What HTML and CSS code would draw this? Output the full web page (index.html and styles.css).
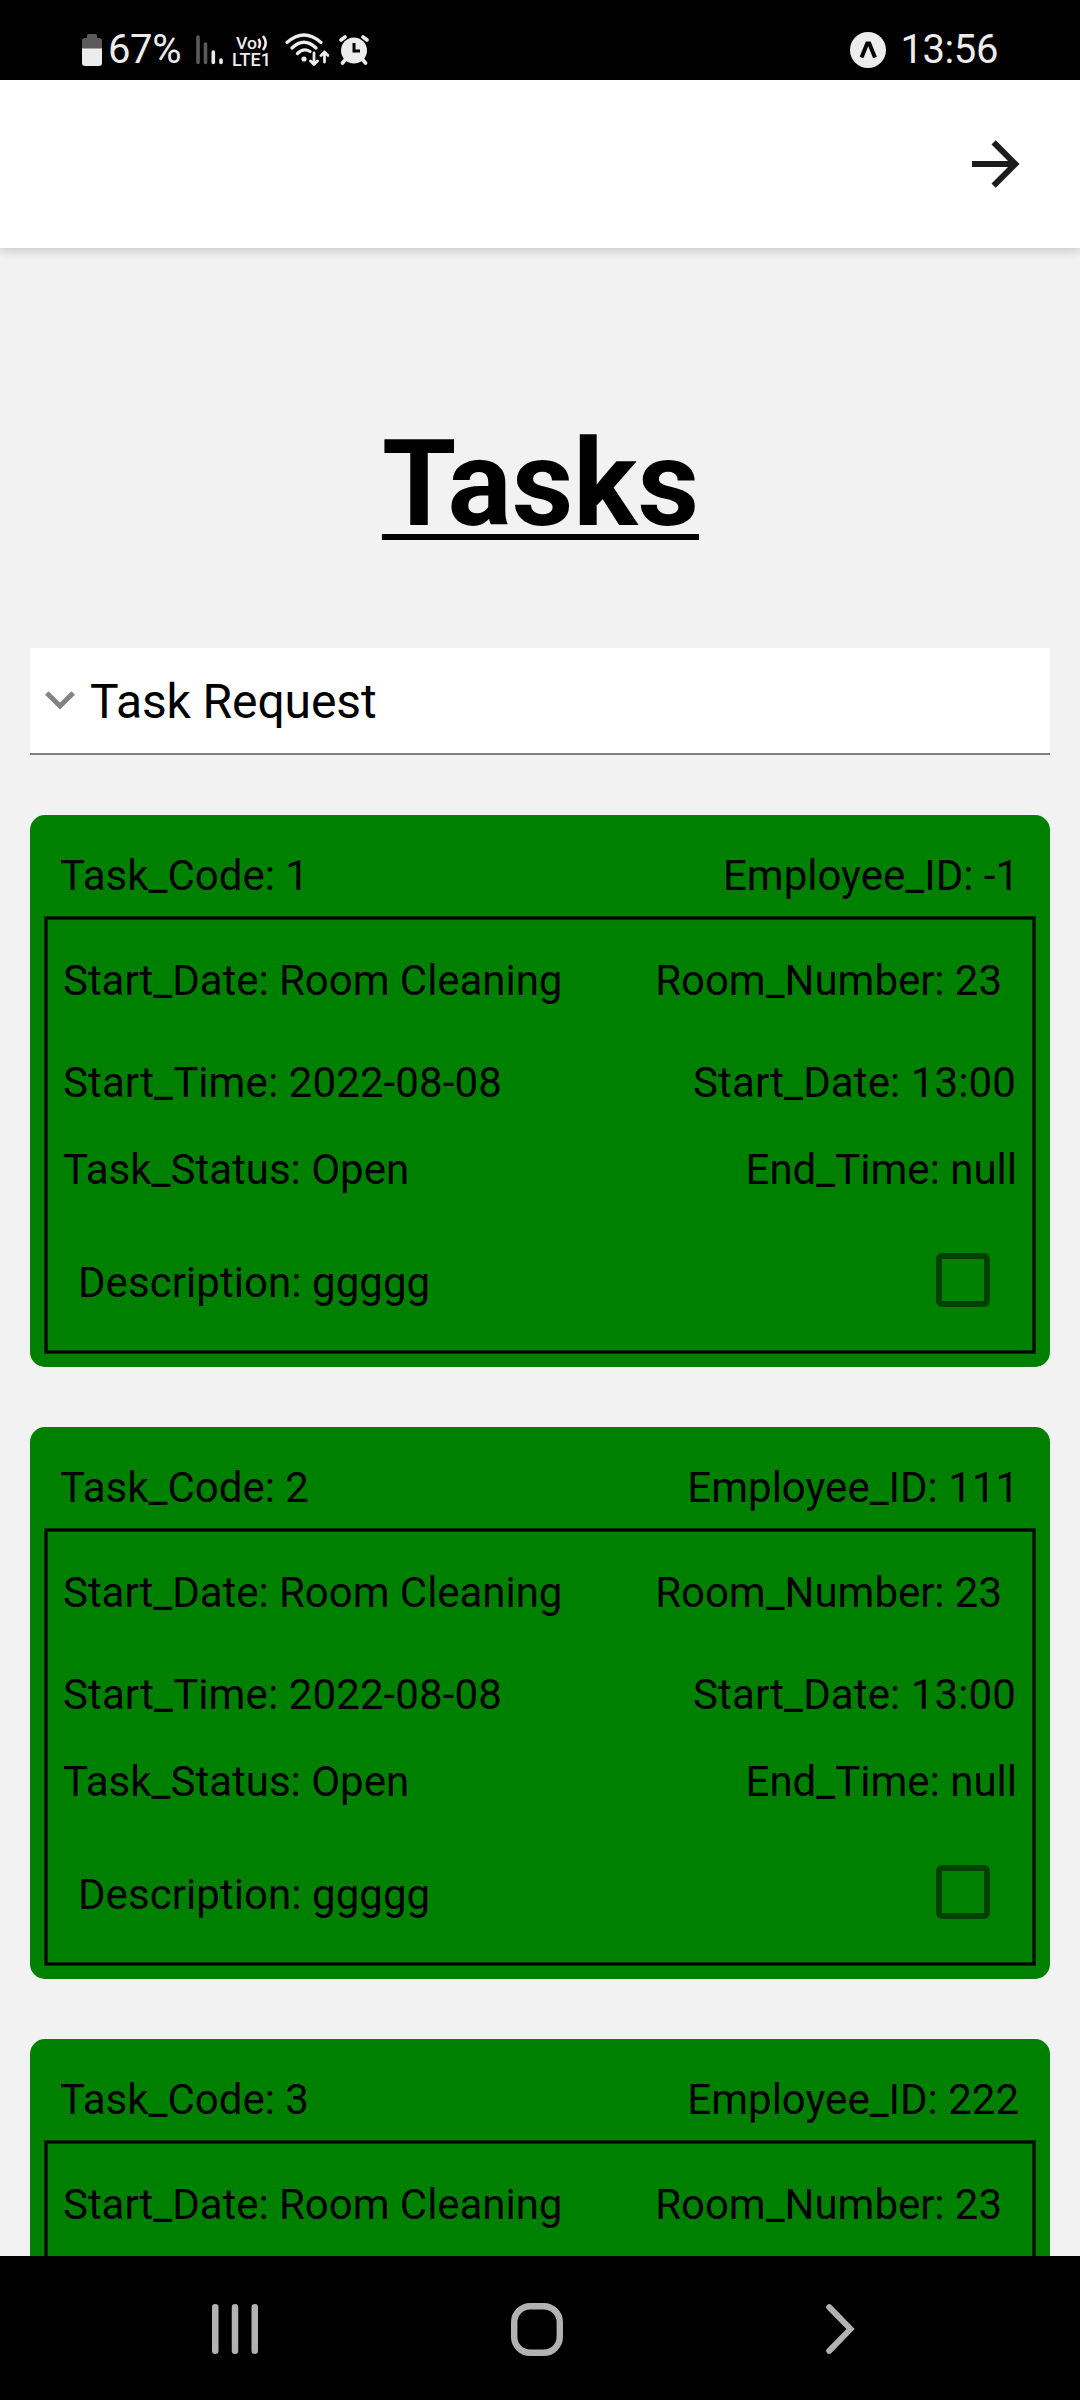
FILE: index.html
```html
<!DOCTYPE html>
<html lang="en">
<head>
<meta charset="utf-8">
<title>Tasks</title>
<link rel="stylesheet" href="styles.css">
</head>
<body>
<div class="screen">
  <div class="status-bar">
    <div class="status-left">
      <svg class="battery" width="20" height="32" viewBox="0 0 20 32">
        <path d="M5 3.500V1.500Q5 0 6.500 0H13.500Q15 0 15 1.500V4H17.500Q20 4 20 6.500V15H0V6.500Q0 4 2.500 4H5z" fill="#5a5a5a"/>
        <path d="M0 14.500H20V29Q20 32 17 32H3Q0 32 0 29z" fill="#ececec"/>
      </svg>
      <span class="status-text percent">67%</span>
      <svg class="signal" width="27" height="30" viewBox="0 0 27 30" fill="none" stroke-width="3.600" stroke-linecap="round">
        <path d="M2 2V27.500M9.500 9V27.500" stroke="#5a5a5a"/>
        <path d="M17.300 17V27.500M25 25V27.500" stroke="#ececec"/>
      </svg>
      <svg class="volte" width="38" height="34" viewBox="0 0 38 34">
        <text x="3" y="14.500" font-size="17" textLength="21" lengthAdjust="spacingAndGlyphs">Vo</text>
        <text x="-1" y="32" font-size="18" textLength="39" lengthAdjust="spacingAndGlyphs">LTE1</text>
        <path d="M25.500 5Q28.500 9.500 25.500 14M30 2Q35.500 9 30 16" fill="none" stroke="#ececec" stroke-width="2.600"/>
      </svg>
      <svg class="wifi" width="44" height="34" viewBox="0 0 44 34" fill="none" stroke="#ececec" stroke-width="3.200" stroke-linecap="round" stroke-linejoin="round">
        <path d="M2 9.500Q19 -5.500 36 9.500M7 15Q19 3.500 31 15M12.500 20.500Q18.500 14.500 25 18.500"/>
        <circle cx="19" cy="26" r="2.600" fill="#ececec" stroke="none"/>
        <path d="M29 20V31.500M25.500 28L29 31.500L32.500 28M39.500 29V19M36 22.500L39.500 19L43 22.500" stroke-width="2.800"/>
      </svg>
      <svg class="alarm" width="30" height="30" viewBox="0 0 30 30">
        <circle cx="15" cy="15.500" r="13" fill="#ececec"/>
        <path d="M2 5L6 2M28 5L24 2M6 25L3.500 28M24 25L26.500 28" stroke="#ececec" stroke-width="3.600" stroke-linecap="round"/>
        <path d="M15 8V16H21" fill="none" stroke="#000" stroke-width="3"/>
      </svg>
    </div>
    <div class="status-right">
      <svg class="expo" width="36" height="36" viewBox="0 0 36 36">
        <circle cx="18" cy="18" r="18" fill="#ececec"/>
        <path d="M11.500 25.500L17.200 11.500H19.300L25 25.500" fill="none" stroke="#000" stroke-width="4"/>
      </svg>
      <span class="status-text clock">13:56</span>
    </div>
  </div>

  <header class="app-bar">
    <svg width="72" height="72" viewBox="0 0 24 24" fill="#1c1c1e">
      <path d="M4 11V13H16L10.500 18.500L11.920 19.920L19.840 12L11.920 4.080L10.500 5.500L16 11H4Z"/>
    </svg>
  </header>

  <main class="content">
    <h1 class="title">Tasks</h1>

    <div class="picker">
      <svg width="30" height="19" viewBox="0 0 30 19">
        <path d="M1.800 2L15 15L28.200 2" fill="none" stroke="#848484" stroke-width="5"/>
      </svg>
      <span>Task Request</span>
    </div>

    <section class="card">
      <div class="row head"><span>Task_Code: 1</span><span>Employee_ID: -1</span></div>
      <div class="details">
        <div class="row room"><span>Start_Date: Room Cleaning</span><span>Room_Number: 23</span></div>
        <div class="row time"><span>Start_Time: 2022-08-08</span><span>Start_Date: 13:00</span></div>
        <div class="row state"><span>Task_Status: Open</span><span>End_Time: null</span></div>
        <div class="row description"><span>Description: ggggg</span><span class="checkbox"></span></div>
      </div>
    </section>

    <section class="card">
      <div class="row head"><span>Task_Code: 2</span><span>Employee_ID: 111</span></div>
      <div class="details">
        <div class="row room"><span>Start_Date: Room Cleaning</span><span>Room_Number: 23</span></div>
        <div class="row time"><span>Start_Time: 2022-08-08</span><span>Start_Date: 13:00</span></div>
        <div class="row state"><span>Task_Status: Open</span><span>End_Time: null</span></div>
        <div class="row description"><span>Description: ggggg</span><span class="checkbox"></span></div>
      </div>
    </section>

    <section class="card">
      <div class="row head"><span>Task_Code: 3</span><span>Employee_ID: 222</span></div>
      <div class="details">
        <div class="row room"><span>Start_Date: Room Cleaning</span><span>Room_Number: 23</span></div>
      </div>
    </section>
  </main>

  <nav class="nav-bar">
    <svg width="46" height="50" viewBox="0 0 46 50" stroke="#b2b2b2" stroke-width="6.500" stroke-linecap="round">
      <path d="M3.250 3.250V46.750M23 3.250V46.750M42.750 3.250V46.750"/>
    </svg>
    <svg class="home" width="52" height="53" viewBox="0 0 52 53">
      <rect x="3.200" y="3.200" width="45.600" height="46.600" rx="16" fill="none" stroke="#b2b2b2" stroke-width="6.400"/>
    </svg>
    <svg width="29" height="50" viewBox="0 0 29 50">
      <path d="M3.200 3.200L24.500 25L3.200 46.800" fill="none" stroke="#b2b2b2" stroke-width="6" stroke-linecap="round"/>
    </svg>
  </nav>
</div>
</body>
</html>
```
FILE: styles.css
```css
* {
  box-sizing: border-box;
}

body {
  margin: 0;
  font-family: Roboto, sans-serif;
  color: #000;
}

svg {
  display: block;
  flex: none;
}

.screen {
  display: flex;
  flex-direction: column;
  width: 1080px;
  height: 2400px;
  overflow: hidden;
  background: #f2f2f2;
}

.status-bar {
  display: flex;
  flex: none;
  justify-content: space-between;
  height: 80px;
  padding: 0 82px;
  background: #000;
}

.status-left,
.status-right {
  display: flex;
  align-items: flex-start;
}

.status-text {
  margin-top: 26px;
  font-size: 40px;
  line-height: 47px;
  color: #ececec;
}

.percent {
  width: 87px;
  margin-left: 6px;
  letter-spacing: -0.4px;
}

.clock {
  letter-spacing: -0.4px;
}

.battery {
  margin-top: 34px;
}

.signal {
  margin: 35px 0 0 1px;
}

.volte {
  margin: 34px 0 0 10px;
  overflow: visible;
  fill: #ececec;
  font-weight: 500;
}

.wifi {
  margin: 33px 0 0 14px;
}

.alarm {
  margin: 35px 0 0 10px;
}

.expo {
  margin: 32px 14px 0 0;
}

.app-bar {
  display: flex;
  flex: none;
  align-items: center;
  justify-content: flex-end;
  height: 168px;
  padding-right: 48px;
  background: #fff;
  box-shadow: 0 3px 10px rgba(0, 0, 0, 0.18);
}

.content {
  flex: 1;
  min-height: 0;
  padding: 166px 30px 0;
  overflow: hidden;
}

.status-bar,
.app-bar {
  position: relative;
}

.title {
  margin: 0 0 93px;
  padding-left: 1px;
  font-size: 120px;
  font-weight: 700;
  line-height: 141px;
  text-align: center;
  text-decoration: underline;
  text-decoration-thickness: 6px;
  text-underline-offset: 9px;
  text-decoration-skip-ink: none;
}

.picker {
  display: flex;
  align-items: center;
  height: 107px;
  padding-left: 15px;
  gap: 15px;
  border-bottom: 2px solid #808080;
  background: #fff;
  font-size: 48px;
  line-height: 56px;
  letter-spacing: -0.1px;
}

.picker span {
  padding-top: 3px;
}

.card {
  height: 552px;
  margin-top: 60px;
  padding: 36px 15px 14px;
  border-radius: 15px;
  background: #008000;
  font-size: 42px;
  line-height: 49px;
}

.row {
  display: flex;
  justify-content: space-between;
}

.head {
  padding: 0 16px 0 15px;
}

.details {
  height: 436px;
  margin-top: 17px;
  padding-top: 37px;
  border: 2px solid #000;
  box-shadow: 0 0 0 1px rgba(0, 0, 0, 0.6), inset 0 0 0 1px rgba(0, 0, 0, 0.6);
}

.room {
  padding: 0 31px 0 16px;
  letter-spacing: -0.04px;
}

.time {
  margin-top: 53px;
  padding: 0 17px 0 16px;
  letter-spacing: 0.11px;
}

.state {
  margin-top: 38px;
  padding: 0 16px;
}

.description {
  margin-top: 64px;
  padding: 0 43px 0 31px;
  letter-spacing: 0.06px;
}

.checkbox {
  width: 54px;
  height: 54px;
  margin-top: -5px;
  border: 6px solid #004000;
  border-radius: 6px;
}

.nav-bar {
  display: flex;
  flex: none;
  align-items: center;
  justify-content: space-between;
  height: 144px;
  padding: 2px 225px 0 212px;
  background: #000;
}

.home {
  margin-right: 10px;
}
```
